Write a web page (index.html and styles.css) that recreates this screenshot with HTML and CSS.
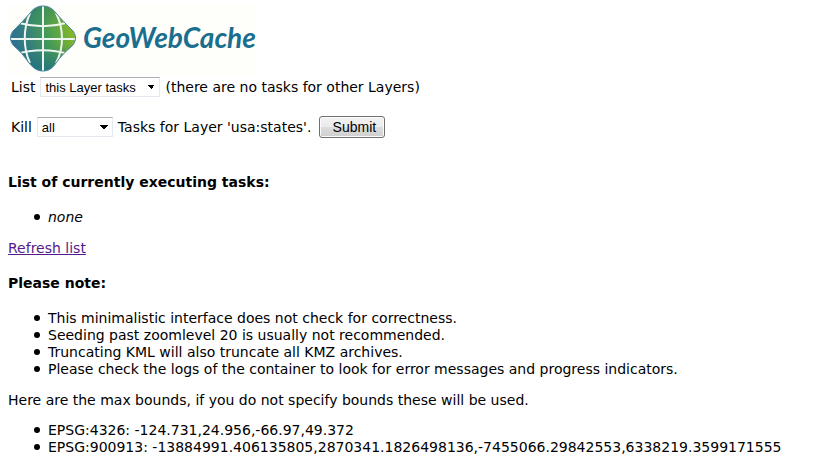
FILE: index.html
```
<!DOCTYPE html>
<html lang="en">
<head>
  <meta charset="UTF-8">
  <meta name="viewport" content="width=device-width, initial-scale=1.0">
  <title>GWC Seed Form</title>
  <link rel="stylesheet" href="styles.css">
</head>
<body>
  <svg class="logo" width="248" height="70" viewBox="0 0 248 70" role="img" aria-label="GeoWebCache">
    <defs>
      <linearGradient id="globe" x1="0" y1="0.7" x2="1" y2="0.4">
        <stop offset="0" stop-color="#2c6c9c"/>
        <stop offset="0.3" stop-color="#35807c"/>
        <stop offset="0.6" stop-color="#479c54"/>
        <stop offset="1" stop-color="#8cba24"/>
      </linearGradient>
      <linearGradient id="shade" x1="0" y1="0" x2="0" y2="1">
        <stop offset="0" stop-color="#1c6e74" stop-opacity="0.4"/>
        <stop offset="0.3" stop-color="#1c6e74" stop-opacity="0"/>
        <stop offset="0.6" stop-color="#1c6e74" stop-opacity="0"/>
        <stop offset="1" stop-color="#1c6e84" stop-opacity="0.7"/>
      </linearGradient>
      <clipPath id="edge">
        <path id="diamond" d="M35 1C40 1 44 3 48 8C53 14 58 19 63 24C69 29 69 37 63 42C58 46 53 51 48 58C44 64 40 66 35 66C30 66 26 64 21 58C16 51 12 46 7 42C1 37 1 29 7 24C12 19 17 14 22 8C26 3 30 1 35 1Z"/>
      </clipPath>
    </defs>
    <rect width="248" height="70" fill="#fefefa"/>
    <use href="#diamond" fill="url(#globe)"/>
    <use href="#diamond" fill="url(#shade)"/>
    <g clip-path="url(#edge)" fill="none" stroke="#eef5ee">
      <path d="M35 0V68M1 34H68" stroke-width="2"/>
      <path d="M22 8C15 24 15 43 22 58M48 8C56 24 56 43 48 58" stroke-width="2"/>
      <path d="M11 18C26 22 44 22 58 18M8 49C25 44 45 44 60 49" stroke-width="2"/>
    </g>
    <use href="#diamond" fill="none" stroke="#4c86a0" stroke-width="1"/>
    <text x="75" y="43" class="logo-name">GeoWebCache</text>
  </svg>

  <form class="list-form">
    <label for="list">List</label>
    <select id="list" class="list-select" name="list">
      <option>this Layer tasks</option>
      <option>all Layers tasks</option>
    </select>
    <span>(there are no tasks for other Layers)</span>
  </form>

  <form class="kill-form">
    <label for="kill">Kill</label>
    <select id="kill" class="kill-select" name="kill_all">
      <option>all</option>
      <option>running</option>
      <option>pending</option>
    </select>
    <span>Tasks for Layer 'usa:states'.</span>
    <button type="submit">Submit</button>
  </form>

  <h4>List of currently executing tasks:</h4>
  <ul>
    <li><i>none</i></li>
  </ul>
  <p><a href="#">Refresh list</a></p>

  <h4>Please note:</h4>
  <ul>
    <li>This minimalistic interface does not check for correctness.</li>
    <li>Seeding past zoomlevel 20 is usually not recommended.</li>
    <li>Truncating KML will also truncate all KMZ archives.</li>
    <li>Please check the logs of the container to look for error messages and progress indicators.</li>
  </ul>
  <p>Here are the max bounds, if you do not specify bounds these will be used.</p>
  <ul>
    <li>EPSG:4326: -124.731,24.956,-66.97,49.372</li>
    <li>EPSG:900913: -13884991.406135805,2870341.1826498136,-7455066.29842553,6338219.3599171555</li>
  </ul>
</body>
</html>
```
FILE: styles.css
```
body {
  margin: 5px 8px 0;
  font-family: Verdana, "DejaVu Sans", sans-serif;
  font-size: 14px;
  line-height: 17px;
  color: #000;
  background: #fff;
}

.logo {
  display: block;
}

.logo-name {
  font-family: Lato, sans-serif;
  font-size: 28px;
  font-weight: bold;
  font-style: italic;
  fill: #1a6f8f;
}

form {
  display: flex;
  align-items: center;
  padding: 0 3px;
}

.list-form {
  margin-top: 2px;
}

.kill-form {
  margin: 19px 0 36px;
}

label {
  margin-right: 5px;
}

select {
  height: 20px;
  margin-right: 5px;
  padding: 0 4px;
  border: 1px solid #e3e9ef;
  border-top-color: #abadb3;
  font: 13px "Liberation Sans", Arial, sans-serif;
  color: #000;
  appearance: none;
  /* small black arrow */
  background: conic-gradient(from 315deg at 50% 100%, #000 90deg, transparent 0) no-repeat right 4px center / 8px 4px;
  background-color: #fff;
}

.list-select {
  width: 120px;
}

.kill-select {
  width: 76px;
}

button {
  width: 66px;
  height: 22px;
  margin-left: 8px;
  padding: 0 0 0 4px;
  border: 1px solid #707070;
  border-radius: 3px;
  font: 14px "Liberation Sans", Arial, sans-serif;
  color: #000;
  background: linear-gradient(#f2f2f2, #ebebeb 50%, #dddddd 50%, #cfcfcf);
  box-shadow: inset 0 0 0 1px #fbfbfb;
}

h4 {
  margin: 18px 0;
  font-size: 14px;
}

ul {
  margin: 14px 0;
  padding-left: 40px;
  list-style: none;
}

li {
  position: relative;
}

li::before {
  content: "";
  position: absolute;
  top: 5px;
  left: -14px;
  width: 6px;
  height: 6px;
  border-radius: 50%;
  background: #000;
}

p {
  margin: 14px 0 13px;
}

a {
  color: #551a8b;
}

p + ul {
  margin-top: 13px;
}
```
